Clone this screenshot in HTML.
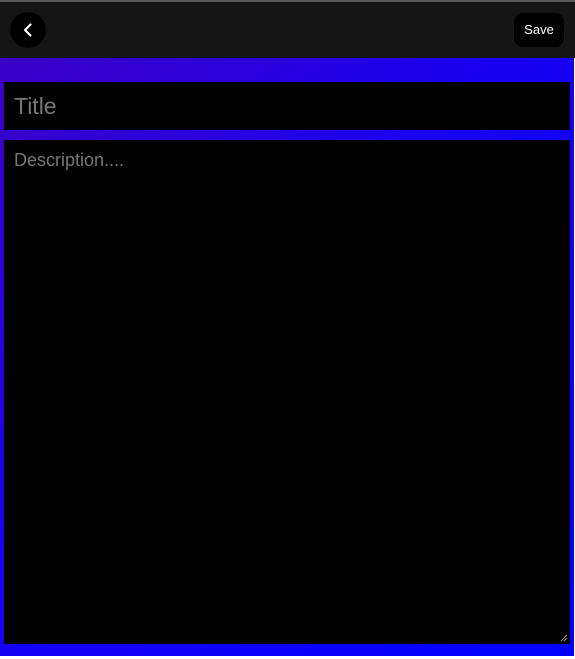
<!DOCTYPE html>
<html><head><style>
html,body{margin:0;padding:0;background:#fff;width:575px;height:659px;overflow:hidden;font-family:"Liberation Sans",sans-serif}
.wrap{position:absolute;left:0;top:0;width:574px;height:656px;background:linear-gradient(135deg,#4000c0 0%,#1a00f0 45%,#0000ff 100%)}
.top{position:absolute;left:0;top:0;width:575px;height:2px;background:#5a5a5a}
.hdr{position:absolute;left:0;top:2px;width:575px;height:56px;background:#161516}
.back{position:absolute;left:10px;top:10px;width:36px;height:36px;border-radius:50%;background:#000}
.save{position:absolute;left:514px;top:11px;width:50px;height:34px;border-radius:9px;background:#000;color:#fff;font-size:13px;line-height:34px;text-align:center}
.title{position:absolute;left:4px;top:82px;width:566px;height:48px;background:#000;color:#777;font-size:23px;line-height:48px;box-sizing:border-box;padding-left:10px}
.desc{position:absolute;left:4px;top:140px;width:566px;height:504px;background:#000;color:#777;font-size:18px;box-sizing:border-box;padding:10px 10px}
.grip{position:absolute;right:2px;bottom:2px}
</style></head><body>
<div class="wrap"></div>
<div class="top"></div>
<div class="hdr">
<div class="back"><svg width="36" height="36" viewBox="0 0 36 36"><path d="M20.5 12.5 L15 18 L20.5 23.5" stroke="#fff" stroke-width="2.2" fill="none" stroke-linecap="round" stroke-linejoin="round"/></svg></div>
<div class="save">Save</div>
</div>
<div class="title">Title</div>
<div class="desc">Description....
<svg class="grip" width="8" height="8" viewBox="0 0 8 8"><path d="M7 1L1 7M7 4L4 7" stroke="#999" stroke-width="1"/></svg></div>
</body></html>
